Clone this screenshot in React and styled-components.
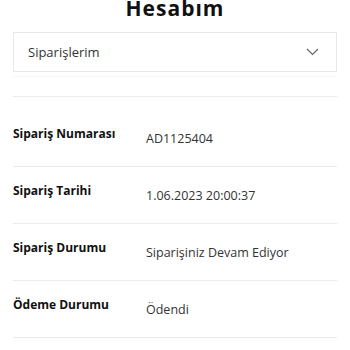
import React from "react";
import styled, { createGlobalStyle } from "styled-components";

const GlobalStyle = createGlobalStyle`
    body {
        margin: 0;
        background: #ffffff;
        font-family: "Open Sans", "Liberation Sans", sans-serif;
    }
`;

const Page = styled.div`
    padding: 0 13px;
`;

const Title = styled.h1`
    margin: -2px 0 0;
    font-size: 21px;
    line-height: 20px;
    font-weight: 700;
    letter-spacing: 1px;
    text-align: center;
    color: #111111;
`;

const Select = styled.div`
    margin-top: 14px;
    height: 40px;
    box-sizing: border-box;
    border: 1px solid #e8e8e8;
    display: flex;
    align-items: center;
    justify-content: space-between;
    padding: 0 17px 0 14px;
    font-size: 13px;
    color: #333333;
`;

const Divider = styled.div`
    height: 1px;
    background: ${(p) => p.color};
    margin-top: ${(p) => p.gap}px;
`;

const Details = styled.div`
    padding-top: 13px;
`;

const Row = styled.div`
    display: grid;
    grid-template-columns: 133px 1fr;
    height: 57px;
    box-sizing: border-box;
    padding-top: 16px;
    border-bottom: 1px solid #ebebeb;
`;

const Label = styled.div`
    font-size: 12px;
    line-height: 16px;
    font-weight: 700;
    color: #111111;
`;

const Value = styled.div`
    margin-top: 5px;
    font-size: 12.5px;
    line-height: 16px;
    color: #333333;
`;

const Chevron = () => (
    <svg width="13" height="8" viewBox="0 0 13 8" fill="none">
        <path d="M1 1l5.5 5.5L12 1" stroke="#666" strokeWidth="1.2" />
    </svg>
);

const rows = [
    ["Sipariş Numarası", "AD1125404"],
    ["Sipariş Tarihi", "1.06.2023 20:00:37"],
    ["Sipariş Durumu", "Siparişiniz Devam Ediyor"],
    ["Ödeme Durumu", "Ödendi"],
];

export default function App() {
    return (
        <Page>
            <GlobalStyle />
            <Title>Hesabım</Title>
            <Select>
                <span>Siparişlerim</span>
                <Chevron />
            </Select>
            <Divider color="#f5f5f5" gap={4} />
            <Divider color="#ebebeb" gap={19} />
            <Details>
                {rows.map(([label, value]) => (
                    <Row key={label}>
                        <Label>{label}</Label>
                        <Value>{value}</Value>
                    </Row>
                ))}
            </Details>
        </Page>
    );
}
